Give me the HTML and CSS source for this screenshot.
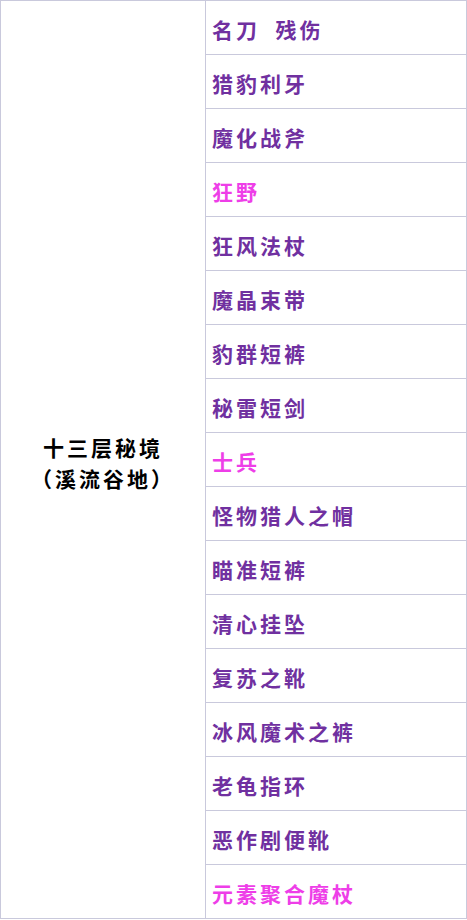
FILE: index.html
```html
<!DOCTYPE html>
<html lang="zh-CN">
<head>
    <meta charset="UTF-8">
    <meta name="viewport" content="width=device-width, initial-scale=1.0">
    <title>十三层秘境 掉落</title>
    <link rel="stylesheet" href="styles.css">
</head>
<body>
    <table class="drop-table">
        <tr>
            <td class="zone" rowspan="17">十三层秘境<br>（溪流谷地）</td>
            <td class="item">名刀&nbsp;&nbsp;残伤</td>
        </tr>
        <tr><td class="item">猎豹利牙</td></tr>
        <tr><td class="item">魔化战斧</td></tr>
        <tr><td class="item rare">狂野</td></tr>
        <tr><td class="item">狂风法杖</td></tr>
        <tr><td class="item">魔晶束带</td></tr>
        <tr><td class="item">豹群短裤</td></tr>
        <tr><td class="item">秘雷短剑</td></tr>
        <tr><td class="item rare">士兵</td></tr>
        <tr><td class="item">怪物猎人之帽</td></tr>
        <tr><td class="item">瞄准短裤</td></tr>
        <tr><td class="item">清心挂坠</td></tr>
        <tr><td class="item">复苏之靴</td></tr>
        <tr><td class="item">冰风魔术之裤</td></tr>
        <tr><td class="item">老龟指环</td></tr>
        <tr><td class="item">恶作剧便靴</td></tr>
        <tr><td class="item rare">元素聚合魔杖</td></tr>
    </table>
</body>
</html>
```

FILE: styles.css
```css
body {
    margin: 0;
    padding: 0;
    background: #ffffff;
    font-family: "Noto Sans CJK SC", "Noto Sans", sans-serif;
}

.drop-table {
    width: 467px;
    border-collapse: collapse;
    table-layout: fixed;
}

.drop-table td {
    border: 1px solid #c9c9dc;
    height: 54px;
    padding: 0;
    box-sizing: border-box;
}

.zone {
    width: 205px;
    text-align: center;
    vertical-align: middle;
    color: #000000;
    font-size: 21px;
    font-weight: bold;
    letter-spacing: 3px;
    line-height: 31px;
    padding-top: 6px !important;
}

.item {
    padding: 3px 0 0 6px !important;
    vertical-align: middle;
    color: #7030a0;
    font-size: 21px;
    font-weight: bold;
    letter-spacing: 3px;
    white-space: nowrap;
}

.item.rare {
    color: #ee3ee8;
}
```
